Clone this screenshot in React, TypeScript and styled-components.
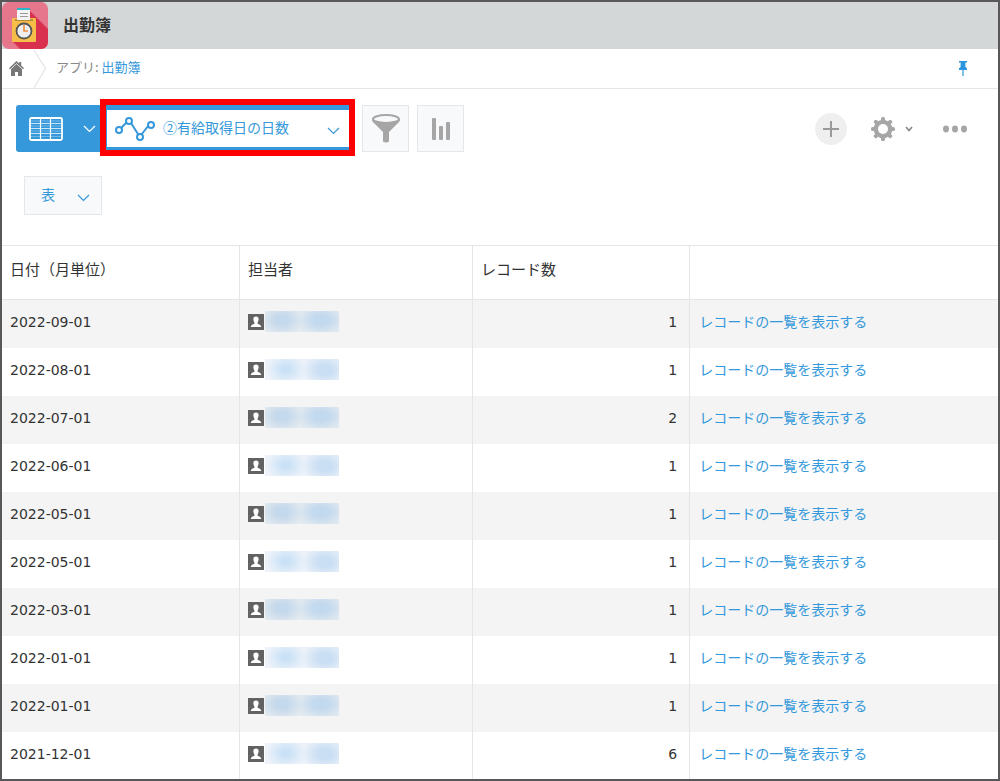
import React from "react";
import styled, { createGlobalStyle } from "styled-components";

const GlobalStyle = createGlobalStyle`
  *, *::before, *::after { box-sizing: border-box; }
  body {
    margin: 0;
    background: #fff;
    color: #333;
    font-family: "DejaVu Sans", "Noto Sans CJK JP", sans-serif;
    font-size: 14px;
  }
  button, select { font: inherit; color: inherit; margin: 0; padding: 0; cursor: pointer; }
  a { text-decoration: none; }
  svg { display: block; flex: none; }
`;

const BLUE = "#3498db";
const LINE = "#e3e7e8";
const GRAY = "#a6a6a6";

const Shell = styled.div`
  display: flex;
  flex-direction: column;
  height: 100vh;
  border: 2px solid #58585a;
`;

const TitleBar = styled.header`
  display: flex;
  align-items: center;
  gap: 15px;
  flex: none;
  height: 47px;
  background: #d4d7d7;
`;

const Title = styled.h1`
  margin: 0;
  padding-bottom: 4px;
  font-family: "Noto Sans CJK JP", sans-serif;
  font-size: 16px;
  line-height: 24px;
  font-weight: 700;
`;

const Breadcrumbs = styled.nav`
  display: flex;
  align-items: center;
  flex: none;
  height: 40px;
  padding-right: 31px;
  border-bottom: 1px solid ${LINE};
  font-family: "Noto Sans CJK JP", sans-serif;
  font-size: 13px;
  line-height: 20px;
  color: #888;
`;

const HomeLink = styled.a`
  display: flex;
  align-items: center;
  gap: 8px;
  padding-left: 7px;
`;

const Crumb = styled.span`
  flex: 1;
  padding: 0 0 4px 6px;
`;

const TextLink = styled.a`
  color: ${BLUE};
`;

const PlainButton = styled.button`
  display: flex;
  align-items: center;
  gap: 10px;
  border: 0;
  background: none;
`;

const Main = styled.main`
  flex: 1;
  min-height: 0;
  overflow: auto;
  scrollbar-width: none;
`;

const Toolbar = styled.div`
  display: flex;
  align-items: center;
  gap: 8px;
  padding: 16px 31px 24px 14px;
`;

const ViewGroup = styled.div`
  position: relative;
  display: flex;
  height: 47px;
  padding: 5px 3px 5px 0;
  border-radius: 3px;
  background: ${BLUE};
`;

const ViewButton = styled(PlainButton)`
  width: 91px;
  padding-left: 13px;
  gap: 20px;
`;

const Picker = styled.label<{ $wide?: boolean }>`
  display: flex;
  align-items: center;
  position: relative;
  width: ${(p) => (p.$wide ? "244px" : "78px")};
  height: ${(p) => (p.$wide ? "37px" : "39px")};
  padding-left: ${(p) => (p.$wide ? "8px" : "0")};
  background: ${(p) => (p.$wide ? "#fff" : "#f7f9fa")};
  border: ${(p) => (p.$wide ? "0" : `1px solid ${LINE}`)};
  color: ${BLUE};
`;

const PickerSelect = styled.select<{ $indent: number }>`
  appearance: none;
  flex: 1;
  min-width: 0;
  height: 100%;
  padding: 0 0 4px ${(p) => p.$indent}px;
  border: 0;
  outline: 0;
  background: transparent;
  color: ${BLUE};
  font-family: "Noto Sans CJK JP", sans-serif;
`;

const PickerArrow = styled.span`
  position: absolute;
  right: 11px;
  top: 50%;
  margin-top: -2px;
  pointer-events: none;
`;

const Highlight = styled.span`
  position: absolute;
  inset: -6px -1px -4px 84px;
  border: 6px solid #fe0000;
  pointer-events: none;
`;

const SquareButton = styled.button`
  display: grid;
  place-items: center;
  width: 47px;
  height: 47px;
  border: 1px solid ${LINE};
  background: #f7f9fa;
`;

const Tools = styled.div`
  display: flex;
  align-items: center;
  gap: 24px;
  margin-left: auto;
`;

const MoreButton = styled(PlainButton)`
  padding-left: 6px;
`;

const AddButton = styled.button`
  display: grid;
  place-items: center;
  width: 32px;
  height: 32px;
  border: 0;
  border-radius: 50%;
  background: #efefef;
`;

const ChartBar = styled.div`
  padding: 0 22px 30px;
`;

const Table = styled.table`
  width: 100%;
  table-layout: fixed;
  border-collapse: separate;
  border-spacing: 0;
`;

const Column = styled.col<{ $share?: number }>`
  width: ${(p) => (p.$share ? `${p.$share}%` : "auto")};
`;

const HeadCell = styled.th`
  height: 55px;
  padding: 0 8px 8px;
  border: solid ${LINE};
  border-width: 1px 1px 1px 0;
  font-family: "Noto Sans CJK JP", sans-serif;
  font-size: 15px;
  font-weight: 400;
  text-align: left;
  &:last-child { border-right: 0; }
`;

const Row = styled.tr`
  &:nth-child(odd) { background: #f4f4f4; }
`;

const Cell = styled.td<{ $numeric?: boolean }>`
  height: 48px;
  padding: 0 ${(p) => (p.$numeric ? "12px" : "8px")} 4px 8px;
  border-right: 1px solid ${LINE};
  text-align: ${(p) => (p.$numeric ? "right" : "left")};
  &:last-child { border-right: 0; padding: 0 8px 6px 9px; }
`;

const Person = styled.span`
  display: flex;
  align-items: center;
  gap: 1px;
`;

const MaskedName = styled.span<{ $shaded: boolean }>`
  width: 74px;
  height: 21px;
  margin-bottom: 2px;
  background: ${(p) =>
    p.$shaded
      ? "radial-gradient(ellipse 22px 16px at 17px 9px, #c5d9ec 30%, transparent), radial-gradient(ellipse 24px 16px at 56px 9px, #c2d9ee 30%, transparent), #e3eaf0"
      : "radial-gradient(ellipse 20px 16px at 21px 10px, #cbe2f6 20%, transparent), radial-gradient(ellipse 24px 18px at 60px 11px, #cbdff4 30%, transparent), #eef3fa"};
`;

const Chevron = ({ color = BLUE }: { color?: string }) => (
  <svg width="13" height="8" viewBox="0 0 13 8" fill="none" stroke={color} strokeWidth="1.2">
    <path d="M1 1l5.500 5.500L12 1" />
  </svg>
);

const AppIcon = () => (
  <svg width="46" height="47" viewBox="0 0 46 47">
    <rect width="46" height="47" rx="7" fill="#e6768b" />
    <path d="M28 9L46 27V40a7 7 0 0 1-7 7H18L10 39z" fill="#d9304e" />
    <rect x="10" y="16" width="24" height="24" rx="1" fill="#f6bd49" />
    <rect x="13" y="17" width="18" height="2" fill="#b98b3c" />
    <path d="M15 6h13v12H15z" fill="#f4f4f4" />
    <path d="M15 6h13v2H15z" fill="#27b6c9" />
    <path d="M18 11.500h8M18 14.500h8" stroke="#999" />
    <circle cx="22" cy="29" r="7.500" fill="#eee" stroke="#555" strokeWidth="1.800" />
    <path d="M22 23v6h4" fill="none" stroke="#f08a3c" strokeWidth="1.600" />
  </svg>
);

const HomeIcon = () => (
  <svg width="15" height="15" viewBox="0 0 15 15" fill="#777">
    <path d="M7.500 0l2.700 2.600V1h2v3.500L15 7.200l-1 1.100-6.500-6-6.500 6L0 7.200z" />
    <path d="M7.500 3L13 8.200V15H9v-4H6v4H2V8.200z" />
  </svg>
);

const CrumbArrow = () => (
  <svg width="18" height="39" viewBox="0 0 18 39" fill="none" stroke={LINE} strokeWidth="1.300">
    <path d="M2 1l11.500 18.500L2 39" />
  </svg>
);

const PinIcon = () => (
  <svg width="8" height="15" viewBox="0 0 8 15" fill="#2b96de">
    <path d="M0 0h8v1.600H6.400v4.500L8 7.300V9H4.600v6H3.400V9H0V7.300l1.600-1.200V1.600H0z" />
  </svg>
);

const GridIcon = () => (
  <svg width="34" height="24" viewBox="0 0 34 24" fill="none" stroke="#fff">
    <rect x="1" y="1" width="32" height="22" rx="1.500" strokeWidth="1.800" />
    <path d="M11.500 2v20M21.500 2v20" strokeWidth="1.200" />
    <path d="M2 6.500h30M2 11.500h30M2 16.500h30" opacity=".75" />
    <path d="M2 4h30M2 9h30M2 14h30M2 19.500h30" opacity=".3" />
  </svg>
);

const LineChartIcon = () => (
  <svg width="40" height="26" viewBox="0 0 40 26" fill="none" stroke={BLUE} strokeWidth="2">
    <path d="M6.500 11.500l5-5M16 7l7 11M26.500 18.500l7-9" />
    <circle cx="4" cy="14" r="3" />
    <circle cx="14" cy="5" r="3" />
    <circle cx="25" cy="21" r="3" />
    <circle cx="36" cy="9" r="3" />
  </svg>
);

const FunnelIcon = () => (
  <svg width="28" height="29" viewBox="0 0 28 29">
    <path d="M0 5c0 2 1 3.500 3 5l8 8v9.500c2 1.300 4 1.300 6 0V18l8-8c2-1.500 3-3 3-5z" fill={GRAY} />
    <ellipse cx="14" cy="5" rx="13" ry="4" fill="#f7f9fa" stroke={GRAY} strokeWidth="2" />
  </svg>
);

const BarsIcon = () => (
  <svg width="20" height="22" viewBox="0 0 20 22" fill={GRAY}>
    <rect x="1" width="4" height="22" rx="1" />
    <rect x="8" y="8" width="4" height="14" rx="1" />
    <rect x="15" y="4" width="4" height="18" rx="1" />
  </svg>
);

const PlusIcon = () => (
  <svg width="16" height="16" viewBox="0 0 16 16" stroke="#9a9a9a" strokeWidth="2">
    <path d="M8 0v16M0 8h16" />
  </svg>
);

const GearIcon = () => (
  <svg width="24" height="24" viewBox="-12 -12 24 24">
    <g fill={GRAY}>
      {[0, 45, 90, 135].map((a) => (
        <rect key={a} x="-2" y="-12" width="4" height="24" rx="1.500" transform={`rotate(${a})`} />
      ))}
      <circle r="9.300" />
    </g>
    <circle r="5" fill="#fff" />
  </svg>
);

const SmallChevron = () => (
  <svg width="8" height="6" viewBox="0 0 8 6" fill="none" stroke="#888" strokeWidth="1.600">
    <path d="M1 1l3 3.500L7 1" />
  </svg>
);

const DotsIcon = () => (
  <svg width="24" height="8" viewBox="0 0 24 8" fill={GRAY}>
    <ellipse cx="3" cy="4" rx="3" ry="3.400" />
    <ellipse cx="12" cy="4" rx="3" ry="3.400" />
    <ellipse cx="21" cy="4" rx="3" ry="3.400" />
  </svg>
);

const UserIcon = () => (
  <svg width="16" height="16" viewBox="0 0 16 16">
    <rect width="16" height="16" fill="#626262" />
    <path d="M8 2.500c2 0 2.800 1.300 2.600 3-.1 1.500-.6 2.300-1 3v1.300c1.500.7 3.300 1.100 3.800 3.200H2.600c.5-2.100 2.300-2.500 3.800-3.200V8.500c-.4-.7-.9-1.500-1-3C5.200 3.800 6 2.500 8 2.500z" fill="#fff" />
  </svg>
);

const records = [
  { date: "2022-09-01", count: 1 },
  { date: "2022-08-01", count: 1 },
  { date: "2022-07-01", count: 2 },
  { date: "2022-06-01", count: 1 },
  { date: "2022-05-01", count: 1 },
  { date: "2022-05-01", count: 1 },
  { date: "2022-03-01", count: 1 },
  { date: "2022-01-01", count: 1 },
  { date: "2022-01-01", count: 1 },
  { date: "2021-12-01", count: 6 },
];

export default function App() {
  return (
    <Shell>
      <GlobalStyle />
      <TitleBar>
        <AppIcon />
        <Title>出勤簿</Title>
      </TitleBar>
      <Breadcrumbs>
        <HomeLink href="#home" aria-label="ホーム">
          <HomeIcon />
          <CrumbArrow />
        </HomeLink>
        <Crumb>
          アプリ: <TextLink href="#app">出勤簿</TextLink>
        </Crumb>
        <PlainButton aria-label="ピン">
          <PinIcon />
        </PlainButton>
      </Breadcrumbs>
      <Main>
        <Toolbar>
          <ViewGroup>
            <ViewButton aria-label="一覧" aria-haspopup="listbox">
              <GridIcon />
              <Chevron color="#fff" />
            </ViewButton>
            <Picker $wide>
              <LineChartIcon />
              <PickerSelect $indent={8} aria-label="グラフ">
                <option>②有給取得日の日数</option>
              </PickerSelect>
              <PickerArrow>
                <Chevron />
              </PickerArrow>
            </Picker>
            <Highlight />
          </ViewGroup>
          <SquareButton aria-label="絞り込み">
            <FunnelIcon />
          </SquareButton>
          <SquareButton aria-label="グラフ作成">
            <BarsIcon />
          </SquareButton>
          <Tools>
            <AddButton aria-label="追加">
              <PlusIcon />
            </AddButton>
            <PlainButton aria-label="設定">
              <GearIcon />
              <SmallChevron />
            </PlainButton>
            <MoreButton aria-label="その他">
              <DotsIcon />
            </MoreButton>
          </Tools>
        </Toolbar>
        <ChartBar>
          <Picker>
            <PickerSelect $indent={16} aria-label="表示形式">
              <option>表</option>
            </PickerSelect>
            <PickerArrow>
              <Chevron />
            </PickerArrow>
          </Picker>
        </ChartBar>
        <Table>
          <colgroup>
            <Column $share={23.9} />
            <Column $share={23.4} />
            <Column $share={21.8} />
            <Column />
          </colgroup>
          <thead>
            <tr>
              <HeadCell>日付（月単位）</HeadCell>
              <HeadCell>担当者</HeadCell>
              <HeadCell>レコード数</HeadCell>
              <HeadCell aria-label="操作" />
            </tr>
          </thead>
          <tbody>
            {records.map((record, index) => (
              <Row key={index}>
                <Cell>{record.date}</Cell>
                <Cell>
                  <Person>
                    <UserIcon />
                    <MaskedName $shaded={index % 2 === 0} />
                  </Person>
                </Cell>
                <Cell $numeric>{record.count}</Cell>
                <Cell>
                  <TextLink href="#records">レコードの一覧を表示する</TextLink>
                </Cell>
              </Row>
            ))}
          </tbody>
        </Table>
      </Main>
    </Shell>
  );
}
